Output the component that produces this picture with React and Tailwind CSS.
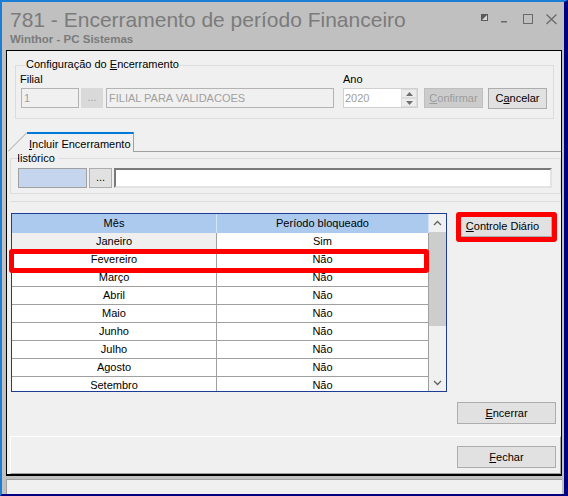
import React from "react";

const meses = [
  ["Janeiro", "Sim"],
  ["Fevereiro", "Não"],
  ["Março", "Não"],
  ["Abril", "Não"],
  ["Maio", "Não"],
  ["Junho", "Não"],
  ["Julho", "Não"],
  ["Agosto", "Não"],
  ["Setembro", "Não"],
];

// standard win-style push button
function Btn({ children, className = "" }) {
  return (
    <div
      className={
        "h-[22px] w-[99px] shrink-0 bg-[#e1e1e1] border border-[#adadad] flex items-center justify-center leading-[13px] " +
        className
      }
    >
      {children}
    </div>
  );
}

function WindowIcons() {
  return (
    <svg className="ml-auto mt-[10px] mr-[3px] shrink-0" width="82" height="14" viewBox="0 0 82 14">
      {/* toggle */}
      <rect x="2.5" y="2.5" width="6" height="6" fill="#d8d8d8" stroke="#5a5a5a" />
      <polygon points="2.5,2.5 8.5,2.5 2.5,8.5" fill="#5a5a5a" />
      {/* minimize */}
      <rect x="22" y="9" width="6" height="1.5" fill="#6a6a6a" />
      {/* maximize */}
      <rect x="44.5" y="2.5" width="9" height="9" fill="none" stroke="#6a6a6a" />
      {/* close */}
      <path d="M67.5 2.5 L77.5 12 M77.5 2.5 L67.5 12" stroke="#6a6a6a" strokeWidth="1.3" fill="none" />
    </svg>
  );
}

export default function App() {
  return (
    <div className="w-[568px] h-[496px] overflow-hidden flex flex-col bg-[#c0c0c0] border-t-2 border-l-2 border-r-4 border-b-2 border-t-[#1a7fd4] border-l-[#1a7fd4] border-r-[#000080] border-b-[#000080] font-['Liberation_Sans',Arial,sans-serif] text-[11px] text-black">
      {/* title bar */}
      <div className="h-[48px] flex shrink-0">
        <div className="pl-[8px] pt-[6px]">
          <div className="text-[21px] leading-[24px] text-[#7b7b7b] whitespace-nowrap">
            781 - Encerramento de período Financeiro
          </div>
          <div className="text-[11.5px] leading-[14px] font-bold text-[#7b7b7b]">Winthor - PC Sistemas</div>
        </div>
        <WindowIcons />
      </div>

      {/* form */}
      <div className="ml-[4px] mr-[2px] h-[426px] shrink-0 border-t border-l border-r border-b-2 border-black bg-[#f0f0f0] flex flex-col">
        {/* Configuração do Encerramento */}
        <div className="relative mt-[14px] ml-[8px] mr-[7px] h-[54px] shrink-0 border border-[#dcdcdc] pl-[5px] pt-[7px] flex items-start">
          <span className="absolute left-[9px] -top-[8px] bg-[#f0f0f0] px-[1px] leading-[13px] whitespace-nowrap">
            Configuração do <u>E</u>ncerramento
          </span>
          <div className="flex flex-col">
            <div className="leading-[13px] -ml-[1px]">Filial</div>
            <div className="mt-[2px] flex">
              <div className="w-[58px] h-[20px] border border-[#b4b4b4] text-[#a0a0a0] pl-[2px] leading-[18px]">1</div>
              <div className="ml-[2px] w-[22px] h-[20px] bg-[#d9d9d9] text-[#a0a0a0] text-center leading-[18px]">...</div>
              <div className="ml-[3px] w-[228px] h-[20px] border border-[#b4b4b4] text-[#a0a0a0] pl-[2px] leading-[18px] whitespace-nowrap">
                FILIAL PARA VALIDACOES
              </div>
            </div>
          </div>
          <div className="ml-[9px] flex flex-col">
            <div className="leading-[13px]">Ano</div>
            <div className="mt-[2px] w-[75px] h-[20px] border border-[#d0d0d0] bg-white flex">
              <span className="flex-1 pl-[1px] leading-[18px] text-[#a0a0a0]">2020</span>
              <div className="w-[16px] flex flex-col">
                <div className="h-[9px] bg-[#ececec] border border-[#dcdcdc] flex items-center justify-center">
                  <svg width="7" height="4" viewBox="0 0 7 4">
                    <polygon points="0,4 7,4 3.5,0" fill="#707070" />
                  </svg>
                </div>
                <div className="h-[9px] bg-[#ececec] border border-[#dcdcdc] flex items-center justify-center">
                  <svg width="7" height="4" viewBox="0 0 7 4">
                    <polygon points="0,0 7,0 3.5,4" fill="#707070" />
                  </svg>
                </div>
              </div>
            </div>
          </div>
          <div className="mt-[15px] ml-[6px] w-[59px] h-[20px] bg-[#cccccc] border border-[#bfbfbf] text-[#9c9c9c] flex items-center justify-center leading-[13px]">
            <span>
              <u>C</u>onfirmar
            </span>
          </div>
          <div className="mt-[15px] ml-[5px] w-[59px] h-[21px] bg-[#e1e1e1] border border-[#adadad] flex items-center justify-center leading-[13px]">
            <span>
              C<u>a</u>ncelar
            </span>
          </div>
        </div>

        {/* tabs */}
        <div className="mt-[13px] ml-[1px] h-[20px] flex shrink-0">
          <svg width="19" height="20" viewBox="0 0 19 20" className="shrink-0">
            <line x1="0" y1="19.5" x2="19" y2="0.5" stroke="#a0a0a0" />
          </svg>
          <div className="w-[107px] h-[20px] shrink-0 border-t-2 border-t-[#0078d7] border-r border-r-[#a0a0a0] pl-[2px] pt-[4px] leading-[13px] whitespace-nowrap">
            <u>I</u>ncluir Encerramento
          </div>
          <div className="flex-1 border-b border-[#a0a0a0]" />
        </div>

        {/* Histórico */}
        <div className="relative mt-[6px] ml-[3px] h-[36px] shrink-0 border border-[#dcdcdc] pl-[7px] pt-[9px] flex">
          <div className="absolute left-[7px] -top-[7px] w-[41px] overflow-hidden bg-[#f0f0f0] leading-[13px] whitespace-nowrap">
            <span className="relative -left-[6px]">Histórico</span>
          </div>
          <div className="w-[69px] h-[20px] bg-[#c6d5ee] border border-[#a0a0a0]" />
          <div className="ml-[2px] w-[23px] h-[20px] bg-[#e1e1e1] border border-[#adadad] text-center leading-[16px]">...</div>
          <div className="ml-[2px] w-[438px] h-[20px] bg-white border-t-2 border-l-2 border-r-2 border-b-2 border-t-[#7a7a7a] border-l-[#7a7a7a] border-r-[#e3e3e3] border-b-[#e3e3e3]" />
        </div>

        {/* grid panel */}
        <div className="mt-[7px] ml-[3px] h-[235px] shrink-0 border-t border-[#dcdcdc] flex flex-col">
          <div className="flex pt-[11px]">
            <div className="relative ml-[1px] w-[436px] h-[179px] shrink-0 border border-[#1e3c96] bg-white flex">
              <div className="w-[417px] flex flex-col overflow-hidden">
                <div className="h-[19px] shrink-0 flex bg-[#abcaee]">
                  <div className="w-[205px] border-r border-[#d4e3f6] text-center leading-[19px]">Mês</div>
                  <div className="w-[212px] border-r border-[#d4e3f6] text-center leading-[19px]">Período bloqueado</div>
                </div>
                {meses.map(([m, b], i) => (
                  <div key={m} className="h-[18px] shrink-0 flex border-b border-[#a0a0a0]">
                    <div
                      className={
                        "w-[205px] border-r border-[#a0a0a0] text-center leading-[17px] " +
                        (i === 0 ? "bg-[#efefef]" : "")
                      }
                    >
                      {m}
                    </div>
                    <div className="w-[212px] border-r border-[#a0a0a0] text-center leading-[17px]">{b}</div>
                  </div>
                ))}
              </div>
              {/* scrollbar */}
              <div className="w-[17px] flex flex-col bg-[#f0f0f0]">
                <div className="h-[18px] shrink-0 flex items-center justify-center">
                  <svg width="9" height="6" viewBox="0 0 9 6">
                    <polyline points="1,5 4.5,1.5 8,5" fill="none" stroke="#606060" strokeWidth="1.3" />
                  </svg>
                </div>
                <div className="h-[94px] shrink-0 bg-[#cdcdcd]" />
                <div className="flex-1" />
                <div className="h-[17px] shrink-0 flex items-center justify-center">
                  <svg width="9" height="6" viewBox="0 0 9 6">
                    <polyline points="1,1 4.5,4.5 8,1" fill="none" stroke="#606060" strokeWidth="1.3" />
                  </svg>
                </div>
              </div>
              {/* highlight */}
              <div className="absolute -left-[3px] top-[35px] w-[420px] h-[24px] border-[5px] border-[#ff0000] rounded-[3px]" />
            </div>
            <div className="relative ml-[12px] mt-[2px] w-[93px] h-[22px] shrink-0 bg-[#e1e1e1] border border-[#adadad] flex items-center justify-center pr-[6px] leading-[13px] whitespace-nowrap">
              <span>
                <u>C</u>ontrole Diário
              </span>
              <div className="absolute -left-[4px] -top-[4px] w-[101px] h-[30px] border-[5px] border-[#ff0000] rounded-[3px]" />
            </div>
          </div>
          <div className="flex justify-end mr-[5px] mt-[10px]">
            <Btn>
              <span>
                <u>E</u>ncerrar
              </span>
            </Btn>
          </div>
        </div>

        {/* bottom */}
        <div className="ml-[3px] h-[38px] shrink-0 border-t border-l border-r border-b border-t-white border-l-white border-r-[#a0a0a0] border-b-[#a0a0a0] flex justify-end pt-[9px] pr-[4px]">
          <Btn>
            <span>
              <u>F</u>echar
            </span>
          </Btn>
        </div>
      </div>

      {/* status bar */}
      <div className="mt-[3px] ml-[4px] mr-[2px] h-[15px] shrink-0 border-t border-l border-[#a0a0a0] bg-[#f0f0f0]" />
    </div>
  );
}
